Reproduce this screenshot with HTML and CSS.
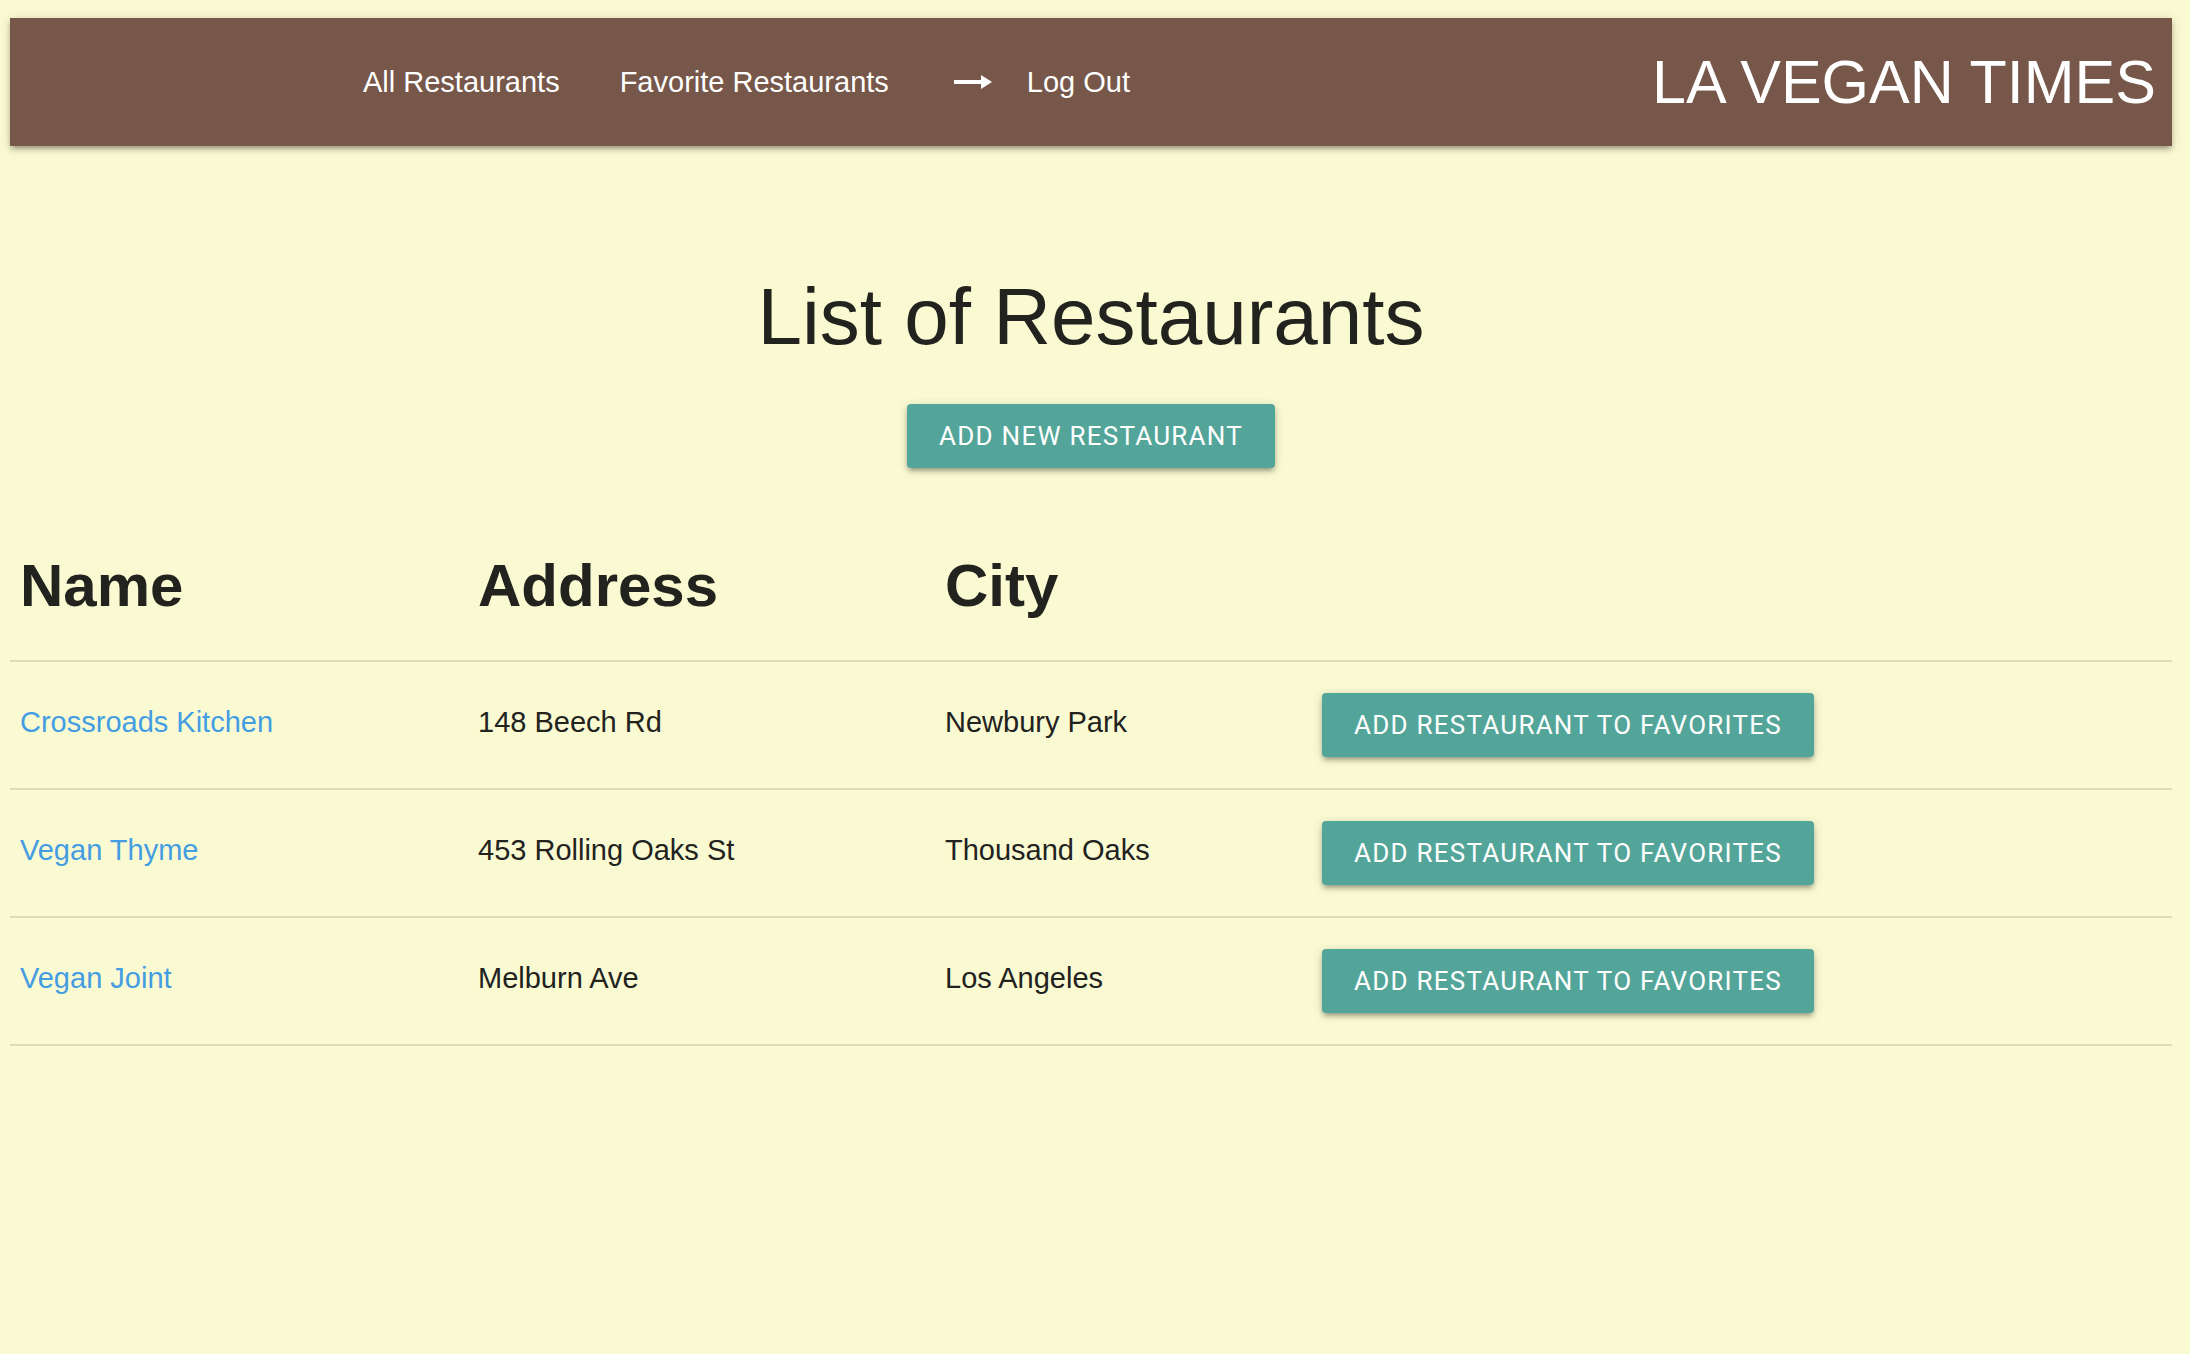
FILE: index.html
```html
<!DOCTYPE html>
<html lang="en">
<head>
<meta charset="utf-8">
<title>LA Vegan Times</title>
<link rel="stylesheet" href="styles.css">
</head>
<body>
<nav class="navbar">
  <ul class="nav-links">
    <li><a class="nav-link" href="#">All Restaurants</a></li>
    <li><a class="nav-link" href="#">Favorite Restaurants</a></li>
    <li><a class="nav-link logout" href="#"><svg class="arrow" width="38" height="16" viewBox="0 0 38 16"><path d="M0 8H30" stroke="#fff" stroke-width="4"/><path d="M27 1L38 8L27 15Z" fill="#fff"/></svg><span>Log Out</span></a></li>
  </ul>
  <a class="brand" href="#">LA VEGAN TIMES</a>
</nav>
<main class="content">
  <h1 class="title">List of Restaurants</h1>
  <div class="actions"><button class="btn">Add New Restaurant</button></div>
  <table class="table">
    <colgroup>
      <col class="col-name">
      <col class="col-address">
      <col class="col-city">
      <col class="col-action">
    </colgroup>
    <thead>
      <tr><th>Name</th><th>Address</th><th>City</th></tr>
    </thead>
    <tbody>
      <tr>
        <td class="cell-text"><a class="link" href="#">Crossroads Kitchen</a></td>
        <td class="cell-text">148 Beech Rd</td>
        <td class="cell-text">Newbury Park</td>
        <td class="cell-action"><button class="btn">Add Restaurant to Favorites</button></td>
      </tr>
      <tr>
        <td class="cell-text"><a class="link" href="#">Vegan Thyme</a></td>
        <td class="cell-text">453 Rolling Oaks St</td>
        <td class="cell-text">Thousand Oaks</td>
        <td class="cell-action"><button class="btn">Add Restaurant to Favorites</button></td>
      </tr>
      <tr>
        <td class="cell-text"><a class="link" href="#">Vegan Joint</a></td>
        <td class="cell-text">Melburn Ave</td>
        <td class="cell-text">Los Angeles</td>
        <td class="cell-action"><button class="btn">Add Restaurant to Favorites</button></td>
      </tr>
    </tbody>
  </table>
</main>
</body>
</html>
```
FILE: styles.css
```css
* { box-sizing: border-box; }
html, body { background: #fafad2; }
body {
  margin: 0;
  padding: 18px 18px 0 10px;
  font-family: "Liberation Sans", Arial, sans-serif;
  color: #22221f;
}
.navbar {
  height: 128px;
  background: #765749;
  display: flex;
  align-items: center;
  justify-content: space-between;
  padding: 0 16px 0 323px;
  box-shadow: 0 4px 4px 0 rgba(0,0,0,0.14), 0 6px 2px -4px rgba(0,0,0,0.12), 0 2px 10px 0 rgba(0,0,0,0.2);
}
.nav-links {
  list-style: none;
  margin: 0;
  padding: 0;
  display: flex;
  align-items: center;
}
.nav-link {
  display: flex;
  align-items: center;
  padding: 0 30px;
  color: #fff;
  text-decoration: none;
  font-size: 29px;
  line-height: 128px;
}
.logout { padding-left: 35px; gap: 35px; }
.arrow { display: block; }
.brand {
  color: #fff;
  text-decoration: none;
  font-size: 61px;
  line-height: 128px;
}
.content { padding-top: 131px; }
.title {
  margin: 0;
  text-align: center;
  font-weight: normal;
  font-size: 80px;
  line-height: 80px;
}
.actions {
  display: flex;
  justify-content: center;
  margin-top: 47px;
}
.btn {
  height: 64px;
  padding: 0 32px;
  border: none;
  border-radius: 4px;
  background: #53a59a;
  color: #fff;
  font-family: Roboto, "Liberation Sans", sans-serif;
  font-size: 26px;
  letter-spacing: 1.25px;
  text-transform: uppercase;
  box-shadow: 0 4px 4px 0 rgba(0,0,0,0.14), 0 6px 2px -4px rgba(0,0,0,0.12), 0 2px 10px 0 rgba(0,0,0,0.2);
  cursor: pointer;
}
.table {
  width: 100%;
  margin-top: 58px;
  border-collapse: collapse;
  table-layout: fixed;
}
.col-name { width: 458px; }
.col-address { width: 467px; }
.col-city { width: 377px; }
.table tr { border-bottom: 2px solid #dcdcbb; }
.table th {
  text-align: left;
  font-size: 60px;
  line-height: 60px;
  font-weight: bold;
  padding: 30px 10px 44px;
}
.table td {
  font-size: 29px;
  vertical-align: middle;
}
.cell-text { padding: 28px 10px 34px; }
.cell-action { padding: 31px 10px; }
.link {
  color: #449de2;
  text-decoration: none;
}
```
